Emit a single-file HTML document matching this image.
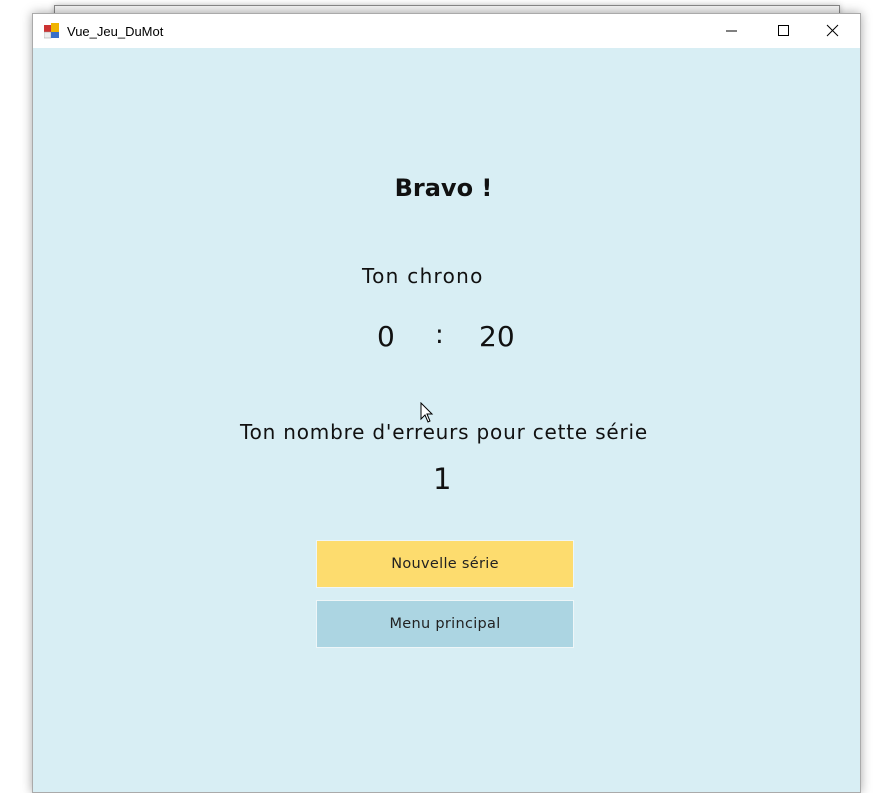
<!DOCTYPE html>
<html><head><style>
body{margin:0;width:881px;height:781px;background:#fff;position:relative;overflow:hidden;font-family:"Liberation Sans",sans-serif}
.behind{position:absolute;left:54px;top:5px;width:784px;height:20px;border:1px solid #888;border-bottom:none;background:#f4f4f4;box-shadow:0 0 6px rgba(0,0,0,.25)}
.win{position:absolute;left:32px;top:13px;width:829px;height:780px;background:#d8eef4;box-shadow:0 0 10px rgba(0,0,0,.35);border:1px solid #aaa;box-sizing:border-box}
.tb{position:absolute;left:0;top:0;right:0;height:34px;background:#fff}
.t{position:absolute;font-size:13px;color:#000;left:34px;top:10px}
.c{position:absolute;text-align:center;color:#111;font-family:"DejaVu Sans","Liberation Sans",sans-serif;white-space:nowrap}
.btn{position:absolute;left:283px;width:256px;height:46px;display:flex;align-items:center;justify-content:center;font-size:14.5px;font-family:"DejaVu Sans",sans-serif;color:#222;border:1px solid #eef6f8;letter-spacing:.3px}
</style></head><body>
<div class="behind"></div>
<div class="win">
<div class="tb">
<svg style="position:absolute;left:11px;top:9px" width="16" height="16"><rect x="0" y="2" width="7" height="7" fill="#c33"/><rect x="7" y="0" width="8" height="9" fill="#f0b400"/><rect x="0" y="9" width="7" height="6" fill="#eee" stroke="#999" stroke-width=".5"/><rect x="7" y="9" width="8" height="6" fill="#3a6fc8"/></svg>
<div class="t">Vue_Jeu_DuMot</div>
<svg style="position:absolute;left:690px;top:9px" width="120" height="16"><line x1="3" y1="8" x2="14" y2="8" stroke="#000"/><rect x="55.5" y="2.5" width="10" height="10" fill="none" stroke="#000"/><path d="M104 2L115 13M115 2L104 13" stroke="#000"/></svg>
</div>
<div class="c" style="left:0;width:821px;top:160px;font-size:24px;font-weight:bold">Bravo !</div>
<div class="c" style="left:329px;top:250px;font-size:20px;letter-spacing:1.3px">Ton chrono</div>
<div class="c" style="left:344px;top:306px;font-size:28px">0</div>
<div class="c" style="left:402px;top:306px;font-size:26px">:</div>
<div class="c" style="left:446px;top:306px;font-size:28px">20</div>
<div class="c" style="left:207px;top:406px;font-size:20px;letter-spacing:.8px">Ton nombre d'erreurs pour cette série</div>
<div class="c" style="left:400px;top:448px;font-size:29px">1</div>
<div class="btn" style="top:526px;background:#fddc6e">Nouvelle série</div>
<div class="btn" style="top:586px;background:#acd5e2">Menu principal</div>
<svg style="position:absolute;left:387px;top:388px" width="14" height="22"><path d="M1 1L1 17L5 13L8 20L10 19L7 12L12 12Z" fill="#fff" stroke="#000"/></svg>
</div>
</body></html>
